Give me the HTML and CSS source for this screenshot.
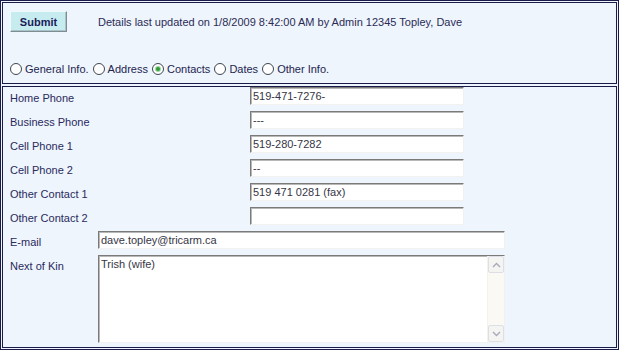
FILE: index.html
```html
<!DOCTYPE html>
<html>
<head>
<meta charset="utf-8">
<link rel="stylesheet" href="styles.css">
</head>
<body>
<div class="frame">
  <div class="panel top">
    <div class="toprow">
      <button class="submit">Submit</button>
      <span class="updated">Details last updated on 1/8/2009 8:42:00 AM by Admin 12345 Topley, Dave</span>
    </div>
    <div class="radios">
      <label class="opt"><span class="radio"></span>General Info.</label>
      <label class="opt"><span class="radio"></span>Address</label>
      <label class="opt"><span class="radio on"></span>Contacts</label>
      <label class="opt"><span class="radio"></span>Dates</label>
      <label class="opt"><span class="radio"></span>Other Info.</label>
    </div>
  </div>
  <div class="panel form">
    <div class="lbl">Home Phone</div><div class="field short">519-471-7276-</div>
    <div class="lbl">Business Phone</div><div class="field short">---</div>
    <div class="lbl">Cell Phone 1</div><div class="field short">519-280-7282</div>
    <div class="lbl">Cell Phone 2</div><div class="field short">--</div>
    <div class="lbl">Other Contact 1</div><div class="field short">519 471 0281 (fax)</div>
    <div class="lbl">Other Contact 2</div><div class="field short"></div>
    <div class="lbl">E-mail</div><div class="field wide">dave.topley@tricarm.ca</div>
    <div class="lbl">Next of Kin</div>
    <div class="field wide area">
      <div class="areatext">Trish (wife)</div>
      <div class="scroll">
        <div class="sbtn"><svg width="9" height="6" viewBox="0 0 9 6"><path d="M1 5 L4.5 1.5 L8 5" fill="none" stroke="#a8aab8" stroke-width="1.4"/></svg></div>
        <div class="track"></div>
        <div class="sbtn"><svg width="9" height="6" viewBox="0 0 9 6"><path d="M1 1 L4.5 4.5 L8 1" fill="none" stroke="#a8aab8" stroke-width="1.4"/></svg></div>
      </div>
    </div>
  </div>
</div>
</body>
</html>
```

FILE: styles.css
```css
* { box-sizing: border-box; }
html, body { margin: 0; padding: 0; background: #eef5fd; }
body {
  font-family: "Liberation Sans", Arial, sans-serif;
  font-size: 11px;
  color: #23234f;
  width: 619px;
  height: 350px;
  overflow: hidden;
}
.frame {
  width: 619px;
  height: 350px;
  border: 1px solid #1b1b4a;
  padding: 1px;
  display: flex;
  flex-direction: column;
  gap: 2px;
}
.panel {
  border: 1px solid #1b1b4a;
  background: #eef5fd;
}
.top {
  height: 82px;
  flex: none;
  padding: 8px 0 0 7px;
}
.toprow {
  display: flex;
  align-items: center;
  gap: 31px;
  height: 21px;
}
.submit {
  width: 57px;
  height: 21px;
  margin: 0;
  padding: 0;
  font: bold 11px "Liberation Sans", Arial, sans-serif;
  color: #1b1b5a;
  background: #c6ecef;
  border: 1px solid;
  border-color: #eefafc #7f8d92 #7f8d92 #eefafc;
  box-shadow: inset -1px -1px 0 #a8c4c8;
}
.updated { color: #2b2b55; }
.radios {
  display: flex;
  margin-top: 29px;
  height: 16px;
  align-items: center;
  gap: 4px;
}
.opt {
  display: flex;
  align-items: center;
  gap: 3px;
  color: #24244f;
}
.radio {
  width: 12px;
  height: 12px;
  border-radius: 50%;
  border: 1px solid #3e4650;
  background: #fff;
  display: inline-flex;
  align-items: center;
  justify-content: center;
}
.radio.on::after {
  content: "";
  width: 4px;
  height: 4px;
  border-radius: 50%;
  background: #2f9c36;
  box-shadow: 0 0 0 1px #9fd6a2;
}
.form {
  flex: 1;
  display: grid;
  grid-template-columns: 88px 152px 214px 41px;
  grid-auto-rows: 18px;
  row-gap: 6px;
  padding: 0 0 0 7px;
  align-content: start;
}
.lbl {
  grid-column: 1 / 3;
  color: #2a2a5c;
  padding-top: 5px;
  white-space: nowrap;
}
.field {
  background: #fff;
  border: 1px solid;
  border-color: #7a7a7a #f1f1f1 #f1f1f1 #7a7a7a;
  box-shadow: inset 1px 1px 0 #b8b8b8;
  color: #363646;
  padding: 2px 0 0 2px;
  white-space: nowrap;
  overflow: hidden;
}
.short { grid-column: 3; }
.lbl:nth-child(13), .lbl:nth-child(15) { grid-column: 1; }
.wide { grid-column: 2 / 5; }
.area {
  grid-row: span 4;
  height: 88px;
  display: flex;
  padding: 0;
}
.areatext {
  flex: 1;
  padding: 2px 0 0 2px;
}
.scroll {
  width: 17px;
  display: flex;
  flex-direction: column;
  background: #fbf9f3;
  border-left: 1px solid #f4f2ea;
}
.sbtn {
  height: 17px;
  border: 1px solid #dcdfe6;
  border-radius: 2px;
  background: #f4f4f2;
  display: flex;
  align-items: center;
  justify-content: center;
}
.track { flex: 1; }
```
